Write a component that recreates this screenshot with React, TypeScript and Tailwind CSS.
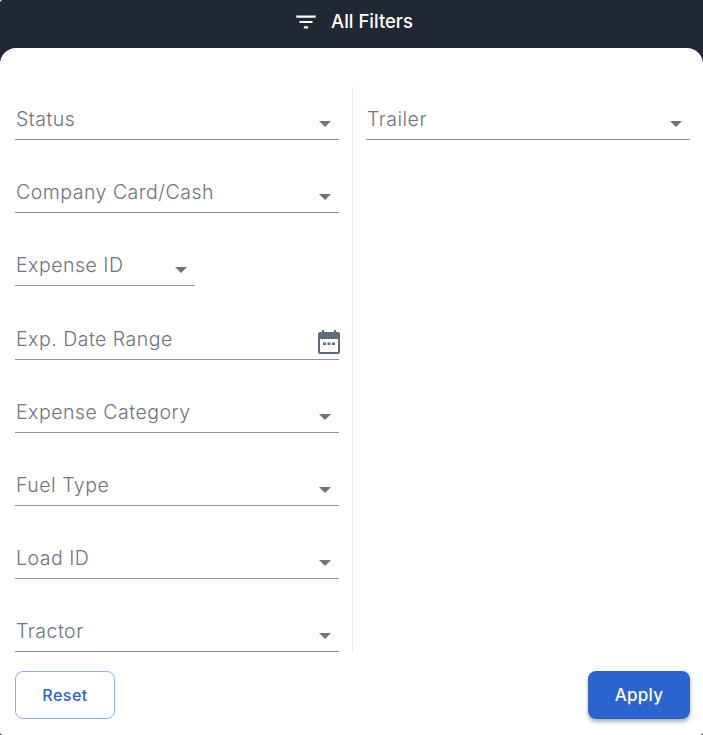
const leftFields = [
  { label: "Status" },
  { label: "Company Card/Cash" },
  { label: "Expense ID", short: true },
  { label: "Exp. Date Range", date: true },
  { label: "Expense Category" },
  { label: "Fuel Type" },
  { label: "Load ID" },
  { label: "Tractor" },
];

function Caret() {
  return (
    <svg width="12" height="6" viewBox="0 0 12 6" className="mb-[12px] mr-[8px] shrink-0">
      <path d="M0 0h12L6 6z" fill="#6b7480" />
    </svg>
  );
}

function CalendarIcon() {
  return (
    <svg width="24" height="26" viewBox="0 0 24 26" className="absolute right-[-2px] bottom-[4px]">
      <path
        d="M3 3h2V1h2v2h10V1h2v2h2a2 2 0 0 1 2 2v18a2 2 0 0 1-2 2H3a2 2 0 0 1-2-2V5a2 2 0 0 1 2-2zm0 7v13h18V10z"
        fill="#5f6b7a"
        fillRule="evenodd"
      />
      <path d="M6 13.5h3v2.5H6zM10.5 13.5h3v2.5h-3zM15 13.5h3v2.5h-3z" fill="#5f6b7a" />
    </svg>
  );
}

function Field({ label, short, date }: { label: string; short?: boolean; date?: boolean }) {
  return (
    <div className="flex h-[73.14px] items-end">
      <div
        className={`relative flex h-[40px] items-end justify-between border-b border-[#8f949a] ${
          short ? "w-[180px]" : "w-full"
        }`}
      >
        <span className="mb-[8px] ml-[1px] text-[19.5px] leading-[24px] font-light tracking-[0.5px] text-[#6c7581]">
          {label}
        </span>
        {date ? <CalendarIcon /> : <Caret />}
      </div>
    </div>
  );
}

export default function App() {
  return (
    <div className="flex h-[735px] w-[703px] flex-col overflow-hidden rounded-tl-[3px] bg-[#202833] font-['Inter','Noto_Sans',sans-serif]">
      <div className="flex h-[48px] shrink-0 items-center justify-center gap-[12px] pb-[5px] pl-[3px]">
        <svg width="26" height="26" viewBox="0 0 24 24" fill="white">
          <path d="M10 18h4v-2h-4v2zM3 6v2h18V6H3zm3 7h12v-2H6v2z" />
        </svg>
        <span className="text-[18.5px] font-medium text-white">All Filters</span>
      </div>
      <div className="flex flex-1 flex-col rounded-t-2xl rounded-b-[3px] bg-white px-[13px] pt-[38px] pl-[15px]">
        <div className="flex">
          <div className="w-[324px] [&>div:first-child]:h-[54.2px]">
            {leftFields.map((f) => (
              <Field key={f.label} label={f.label} short={f.short} date={f.date} />
            ))}
          </div>
          <div className="mx-[13px] w-px bg-[#ececec]" />
          <div className="flex-1 [&>div:first-child]:h-[54.2px]">
            <Field label="Trailer" />
          </div>
        </div>
        <div className="mt-[19px] flex items-start justify-between">
          <button className="h-[48px] w-[100px] rounded-lg border border-[#8fb0ea] bg-white text-[16px] font-medium tracking-[0.5px] text-[#2b63cf]">
            Reset
          </button>
          <button className="h-[48px] w-[102px] rounded-lg bg-[#2b63cf] pt-[2px] text-[17px] font-medium tracking-[0.3px] text-white shadow-[0_3px_4px_rgba(0,0,0,0.3)]">
            Apply
          </button>
        </div>
      </div>
    </div>
  );
}
